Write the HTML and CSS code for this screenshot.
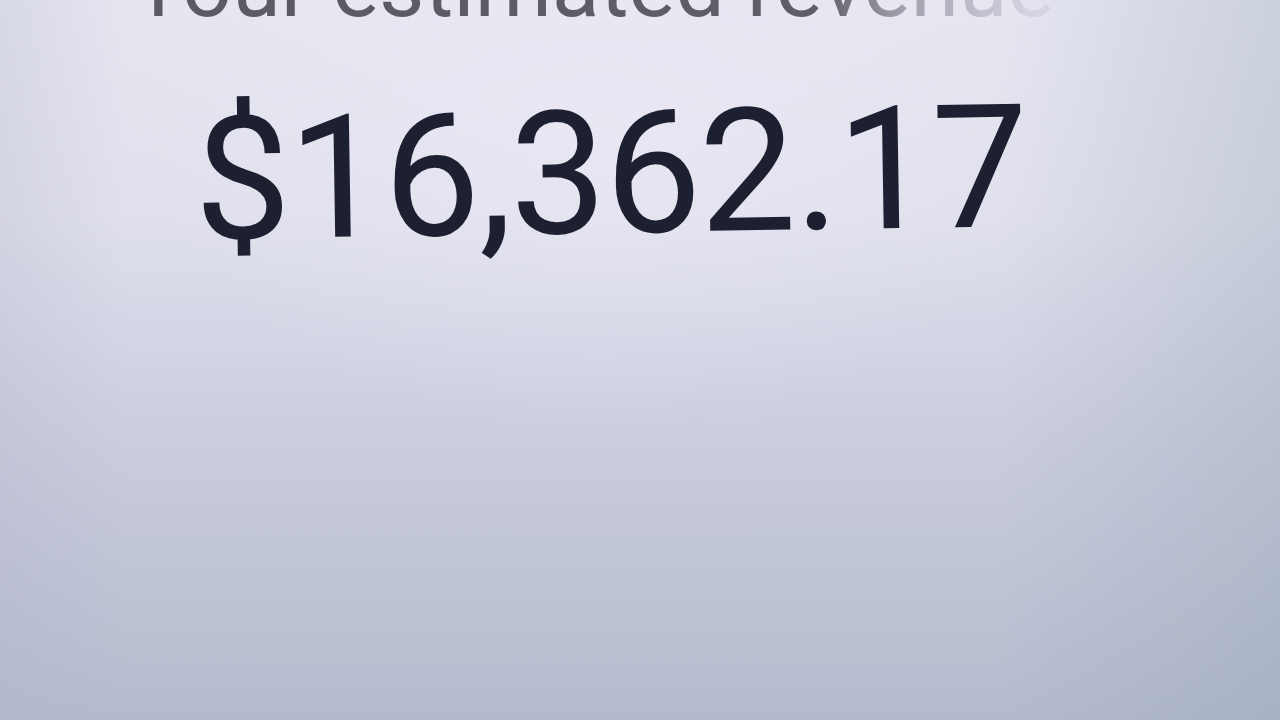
FILE: index.html
```html
<!DOCTYPE html>
<html lang="en">
<head>
<meta charset="utf-8">
<title>Estimated revenue</title>
<link rel="stylesheet" href="styles.css">
</head>
<body>
<main class="screen">
  <div class="glare"></div>
  <section class="card">
    <h1 class="label">Your estimated revenue</h1>
    <p class="amount">$16,362.17</p>
  </section>
</main>
</body>
</html>
```
FILE: styles.css
```css
html, body {
  margin: 0;
  padding: 0;
  width: 1280px;
  height: 720px;
  overflow: hidden;
}
body {
  font-family: Roboto, "Noto Sans", "Liberation Sans", sans-serif;
}
.screen {
  position: relative;
  width: 1280px;
  height: 720px;
  overflow: hidden;
  background:
    linear-gradient(90deg, rgba(175,176,198,0.25) 0%, rgba(175,176,198,0) 10%, rgba(0,0,0,0) 78%, rgba(140,160,175,0.3) 100%),
    linear-gradient(180deg, #e6e6f1 0%, #e0e0ec 30%, #cbcde0 60%, #b4bacd 100%);
}
.glare {
  position: absolute;
  inset: 0;
  background: radial-gradient(ellipse 460px 320px at 600px 110px, rgba(236,234,246,0.55), rgba(236,234,246,0));
  pointer-events: none;
}
.card {
  position: relative;
  padding-left: 132px;
  display: flex;
  flex-direction: column;
}
.label {
  margin: -58px 0 0 0;
  font-size: 88px;
  line-height: 1;
  font-weight: 400;
  white-space: nowrap;
  background: linear-gradient(90deg, #5a5a64 0%, #5e5e68 60%, #a0a0ac 67%, #d2d3df 78%, #dfdfea 100%);
  -webkit-background-clip: text;
  background-clip: text;
  color: transparent;
}
.amount {
  margin: 64px 0 0 62px;
  font-size: 172px;
  line-height: 1;
  font-weight: 400;
  color: #1d2030;
  white-space: nowrap;
  letter-spacing: -2px;
  transform: rotate(-0.9deg);
  transform-origin: left center;
}
```
